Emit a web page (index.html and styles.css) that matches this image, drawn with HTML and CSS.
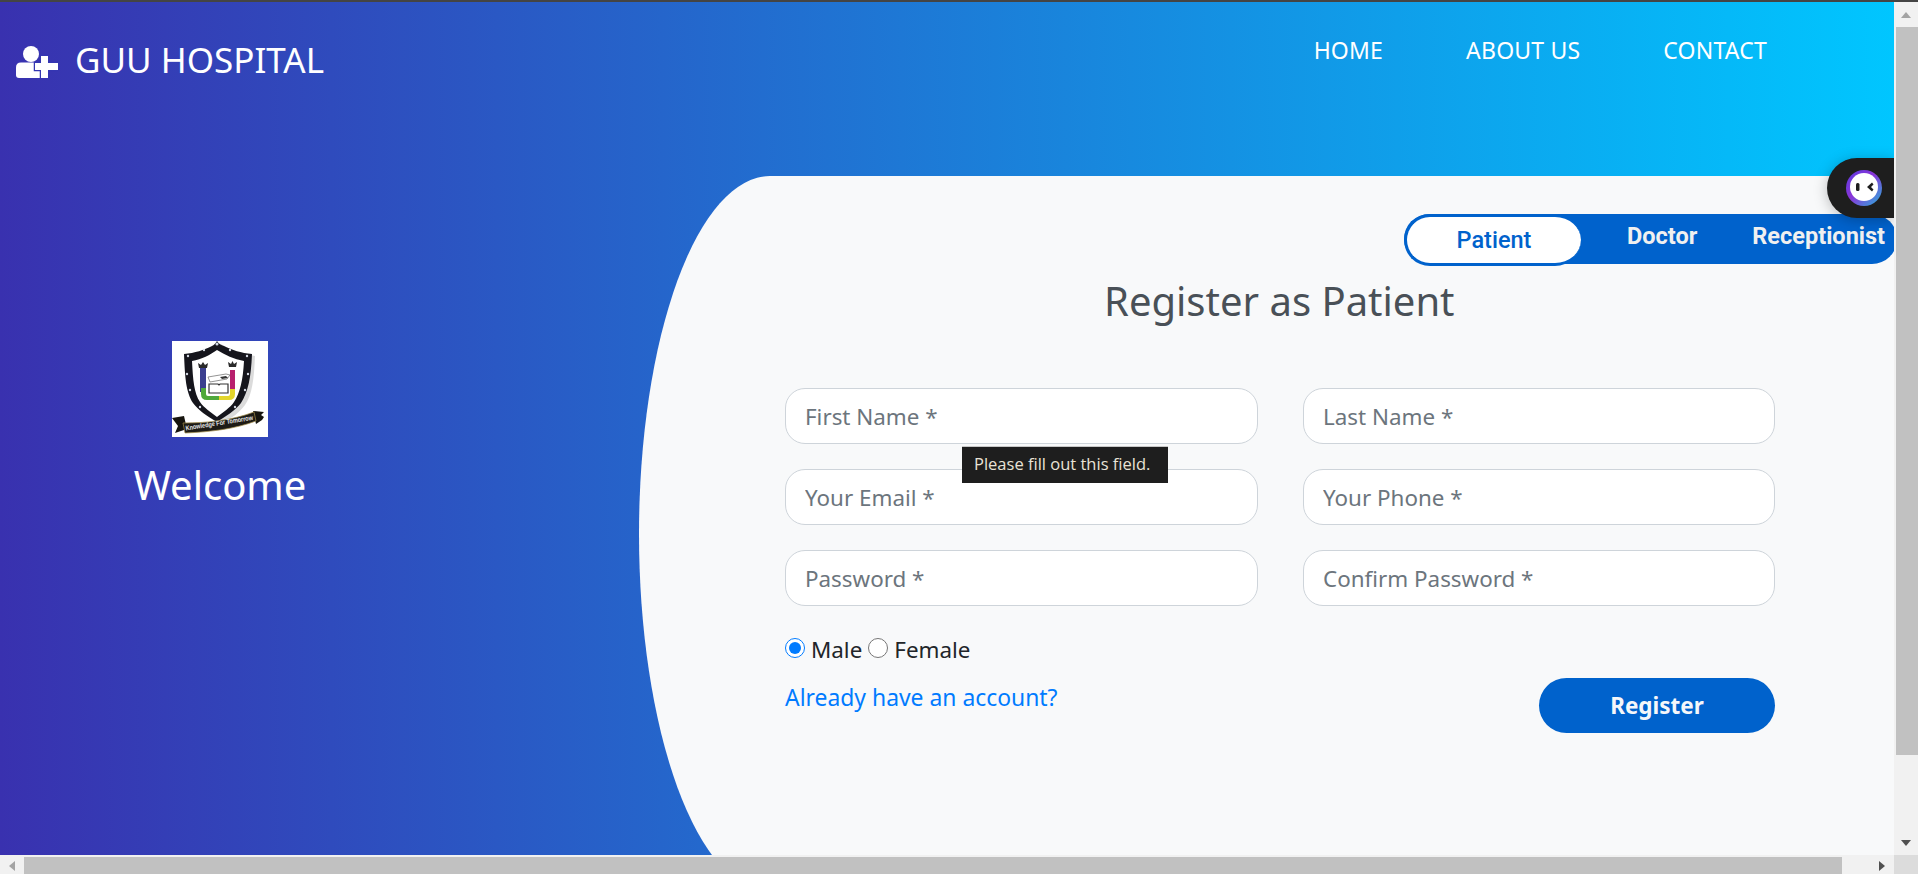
FILE: index.html
```html
<!DOCTYPE html>
<html lang="en">
<head>
  <meta charset="UTF-8">
  <meta name="viewport" content="width=device-width, initial-scale=1.0">
  <title>GUU Hospital - Register</title>
  <link rel="stylesheet" href="styles.css">
</head>
<body>
  <div class="top-line"></div>
  <div class="window">
    <div class="page">
      <header class="navbar">
        <a class="brand" href="#">
          <svg class="brand-icon" viewBox="0 0 42 32" width="42" height="32">
            <circle cx="15" cy="8" r="8" fill="#fff"/>
            <path d="M5 16.500h20q7 0 7 7V32H3q-3 0-3-3v-7.500q0-5 5-5z" fill="#fff"/>
            <path d="M25 10h7v7h10v7H32v8h-7v-8H19v-7h6z" fill="#fff" stroke="#3436b2" stroke-width="2.500" paint-order="stroke"/>
          </svg>
          <span>GUU HOSPITAL</span>
        </a>
        <nav class="nav-links">
          <a href="#">HOME</a>
          <a href="#">ABOUT US</a>
          <a href="#">CONTACT</a>
        </nav>
      </header>

      <main class="register">
        <div class="register-left">
          <svg class="logo" viewBox="0 0 96 96" width="96" height="96">
            <rect width="96" height="96" fill="#fff"/>
            <!-- shield -->
            <path d="M49 3c7 5 18 9 34 12-1 24-3 39-10 49-5 7-13 13-24 19z" fill="#999" opacity=".35"/>
            <path d="M45 0c-2 3-3 4-5 5-8 4-17 7-28 8 1 24 2 38 9 49 5 7 14 13 24 19 9-6 19-12 24-19 7-11 10-25 11-49-11-1-20-4-28-8-3-1-5-2-7-5z" fill="#15151c"/>
            <path d="M45 9c-7 5-15 9-25 11 1 19 2 32 8 41 4 6 11 10 17 15 6-5 13-9 17-15 6-9 9-22 10-41-10-2-19-6-27-11z" fill="#fff"/>
            <g fill="#d4dae4">
              <circle cx="45" cy="3" r="1.500"/><circle cx="32" cy="9" r="1.200"/><circle cx="58" cy="9" r="1.200"/>
              <circle cx="16" cy="15" r="1.200"/><circle cx="75" cy="15" r="1.200"/><circle cx="15" cy="33" r="1.200"/>
              <circle cx="76" cy="33" r="1.200"/><circle cx="18" cy="49" r="1.200"/><circle cx="73" cy="49" r="1.200"/>
              <circle cx="28" cy="66" r="1.200"/><circle cx="63" cy="66" r="1.200"/>
            </g>
            <!-- pillars and U -->
            <rect x="28" y="27" width="6" height="24" fill="#3b3f8f"/>
            <rect x="58" y="29" width="5" height="19" fill="#b8206e"/>
            <path d="M29 47h5v6q0 2 2 2h11v4H35q-6 0-6-6z" fill="#4fa83c"/>
            <path d="M47 55h9q2 0 2-2v-5h5v5q0 6-6 6H47z" fill="#e3d52c"/>
            <path d="M27 27l-1-5 3 2 2-3 2 3 3-2-1 5z" fill="#2a2a2a"/>
            <path d="M57 26l-1-5 3 2 1.500-3 1.500 3 3-2-1 5z" fill="#2a2a2a"/>
            <!-- book and scroll -->
            <path d="M37 43h9l1 1 1-1h8v9H37z" fill="#fff" stroke="#333" stroke-width="1.200"/>
            <path d="M36 36l18-3 4 1-3 4-17 3z" fill="#fff" stroke="#666" stroke-width=".7"/>
            <path d="M48 36l6-1 2 2-6 1z" fill="#333"/>
            <!-- ribbon -->
            <path d="M0 77l12-2 3 13-12 4 3-7z" fill="#17150f"/>
            <path d="M92 71l-11-1 3 13 6-4 2-3-3-2z" fill="#17150f"/>
            <path d="M11 82c26 0 50-3 71-11l2 9c-21 8-46 11-71 12z" fill="#1d1b16" stroke="#a58f4c" stroke-width=".7"/>
            <text class="logo-motto" x="14" y="89.500" textLength="68" lengthAdjust="spacingAndGlyphs" transform="rotate(-9 14 89.500)">Knowledge For Tomorrow</text>
          </svg>
          <h3 class="welcome">Welcome</h3>
        </div>

        <section class="register-right">
          <ul class="tabs">
            <li class="tab tab-active">Patient</li>
            <li class="tab tab-doctor">Doctor</li>
            <li class="tab tab-recep">Receptionist</li>
          </ul>
          <h3 class="register-heading">Register as Patient</h3>
          <form class="register-form">
            <input class="field" type="text" placeholder="First Name *" required>
            <input class="field" type="text" placeholder="Last Name *" required>
            <input class="field" type="email" placeholder="Your Email *" required>
            <input class="field" type="text" placeholder="Your Phone *" required>
            <input class="field" type="password" placeholder="Password *" required>
            <input class="field" type="password" placeholder="Confirm Password *" required>
            <div class="form-foot">
              <div class="gender">
                <input type="radio" name="gender" id="male" checked>
                <label for="male">Male</label>
                <input type="radio" name="gender" id="female">
                <label for="female">Female</label>
              </div>
              <a class="login-link" href="#">Already have an account?</a>
            </div>
            <div class="form-submit">
              <button class="btn-register" type="button">Register</button>
            </div>
            <div class="field-tip">Please fill out this field.</div>
          </form>
        </section>
      </main>

      <div class="helper-tab">
        <svg viewBox="0 0 36 36" width="36" height="36">
          <defs>
            <linearGradient id="ring" x1="0" y1="0" x2="1" y2="1">
              <stop offset="0" stop-color="#5b3be0"/>
              <stop offset=".45" stop-color="#8a35d8"/>
              <stop offset="1" stop-color="#27b4dc"/>
            </linearGradient>
          </defs>
          <circle cx="18" cy="18" r="18" fill="url(#ring)"/>
          <circle cx="18" cy="17" r="14" fill="#fff"/>
          <rect x="10" y="13" width="3.500" height="8" rx="1.500" fill="#1e1e1e"/>
          <path d="M26 12.500l-5 4.500 5 4.500 1.500-2-2.500-2.500 2.500-2.500z" fill="#1e1e1e"/>
        </svg>
      </div>
    </div>

    <div class="vscroll">
      <div class="arrow-box"><i class="arrow arrow-up"></i></div>
      <div class="vthumb"></div>
      <div class="vtrack"></div>
      <div class="arrow-box"><i class="arrow arrow-down"></i></div>
    </div>
  </div>

  <div class="hscroll">
    <div class="arrow-box-h"><i class="arrow arrow-left"></i></div>
    <div class="hthumb"></div>
    <div class="htrack"></div>
    <div class="arrow-box-h"><i class="arrow arrow-right"></i></div>
    <div class="corner"></div>
  </div>
</body>
</html>
```

FILE: styles.css
```css
* {
  box-sizing: border-box;
}
html, body {
  height: 100%;
}
body {
  margin: 0;
  overflow: hidden;
  display: flex;
  flex-direction: column;
  font-family: "Noto Sans", Arial, sans-serif;
  color: #212529;
  background: #f1f1f1;
}
a {
  text-decoration: none;
}
.top-line {
  height: 2px;
  background: #444;
}
.window {
  display: flex;
  height: 853px;
}
.page {
  position: relative;
  width: 1894px;
  overflow: hidden;
  background: linear-gradient(to right, #3931af, #00c6ff);
}

/* header */
.navbar {
  height: 174px;
  display: flex;
  justify-content: space-between;
  align-items: flex-start;
  padding: 35px 127px 0 16px;
}
.brand {
  display: flex;
  align-items: center;
  gap: 17px;
  color: #fff;
  font-size: 35px;
  line-height: 46px;
}
.brand-icon {
  margin-top: 4px;
}
.nav-links {
  display: flex;
  gap: 83px;
  margin-top: -1px;
}
.nav-links a {
  color: #fff;
  font-size: 23px;
  letter-spacing: 0.2px;
  line-height: 28px;
}

/* main */
.register {
  display: flex;
  align-items: flex-start;
}
.register-left {
  width: 440px;
  padding-top: 165px;
  display: flex;
  flex-direction: column;
  align-items: center;
}
.logo {
  display: block;
}
.logo-motto {
  font-family: "Liberation Sans", Arial, sans-serif;
  font-size: 6.800px;
  font-weight: 700;
  fill: #e6e6e6;
}
.welcome {
  margin: 20px 0 0;
  color: #fff;
  font-size: 40px;
  font-weight: 400;
  line-height: 56px;
}
.register-right {
  position: relative;
  width: 1255px;
  height: 716px;
  margin-left: 199px;
  padding-top: 38px;
  background: #f8f9fa;
  border-top-left-radius: 131px 50%;
  border-bottom-left-radius: 131px 50%;
}

/* tabs */
.tabs {
  display: flex;
  list-style: none;
  margin: 0 -3px 0 765px;
  padding: 0;
  height: 50px;
  background: #0062cc;
  border-radius: 25px;
  font-family: Roboto, Arial, sans-serif;
  font-size: 23.500px;
  color: #f0f0f0;
}
.tab {
  font-weight: 700;
  line-height: 44px;
}
.tab-active {
  width: 177px;
  height: 52px;
  line-height: 47px;
  text-align: center;
  color: #0062cc;
  font-weight: 500;
  background: #fff;
  border: 3px solid #0062cc;
  border-right: 0;
  border-radius: 26px;
}
.tab-doctor {
  margin-left: 46px;
}
.tab-recep {
  margin-left: 55px;
}
.register-heading {
  margin: 9px 0 0;
  padding-left: 465px;
  color: #495057;
  font-size: 40px;
  font-weight: 400;
  line-height: 56px;
}

/* form */
.register-form {
  position: relative;
  display: grid;
  grid-template-columns: 473px 472px;
  column-gap: 45px;
  row-gap: 25px;
  margin: 59px 0 0 146px;
}
.field {
  height: 56px;
  padding: 0 19px;
  font: 22.400px "Noto Sans", Arial, sans-serif;
  color: #495057;
  background: #fff;
  border: 1px solid #ced4da;
  border-radius: 20px;
  outline: none;
}
.field::placeholder {
  color: #6c757d;
  opacity: 1;
}
.form-foot {
  margin-top: 3px;
}
.gender {
  display: flex;
  align-items: center;
  gap: 6px;
  font-size: 22.400px;
  line-height: 32px;
}
.gender input {
  width: 20px;
  height: 20px;
  margin: -4px 0 0;
  accent-color: #007bff;
}
.login-link {
  display: block;
  margin-top: 16px;
  color: #007bff;
  font-size: 22.900px;
  line-height: 32px;
}
.form-submit {
  display: flex;
  justify-content: flex-end;
  padding-top: 47px;
}
.btn-register {
  width: 236px;
  height: 55px;
  border: 0;
  border-radius: 28px;
  background: #0062cc;
  color: #f5f7fa;
  font: 700 22.500px "Noto Sans", Arial, sans-serif;
}
.field-tip {
  position: absolute;
  left: 177px;
  top: 58px;
  width: 206px;
  height: 37px;
  padding-left: 12px;
  background: #1e1e1e;
  border-top: 1px solid #c8c8c8;
  color: #e9e3d6;
  font-family: "Open Sans", Arial, sans-serif;
  font-size: 16.500px;
  line-height: 34px;
  white-space: nowrap;
}

/* floating helper on the right edge */
.helper-tab {
  position: absolute;
  right: 0;
  top: 156px;
  width: 67px;
  height: 60px;
  display: flex;
  align-items: center;
  padding-left: 19px;
  background: #1e1e1e;
  border-radius: 30px 0 0 30px;
  box-shadow: 0 2px 14px rgba(0, 0, 0, 0.25);
}

/* scrollbars */
.vscroll {
  width: 24px;
  display: flex;
  flex-direction: column;
  background: #f1f1f1;
}
.arrow-box {
  height: 25px;
  display: flex;
  align-items: center;
  justify-content: center;
}
.vthumb {
  height: 728px;
  margin-left: 2px;
  background: #c1c1c1;
}
.vtrack {
  flex: 1;
}
.hscroll {
  display: flex;
  height: 19px;
  padding-top: 2px;
  background: #f1f1f1;
}
.arrow-box-h {
  width: 24px;
  display: flex;
  align-items: center;
  justify-content: center;
}
.hthumb {
  width: 1818px;
  background: #c1c1c1;
}
.htrack {
  flex: 1;
}
.corner {
  width: 24px;
  margin-top: -2px;
  background: #dcdcdc;
}
.arrow {
  width: 0;
  height: 0;
  border: 5px solid transparent;
}
.arrow-up {
  border-top: 0;
  border-bottom: 6px solid #a3a3a3;
}
.arrow-down {
  border-bottom: 0;
  border-top: 6px solid #505050;
}
.arrow-left {
  border-left: 0;
  border-right: 6px solid #a3a3a3;
}
.arrow-right {
  border-right: 0;
  border-left: 6px solid #505050;
}
```
